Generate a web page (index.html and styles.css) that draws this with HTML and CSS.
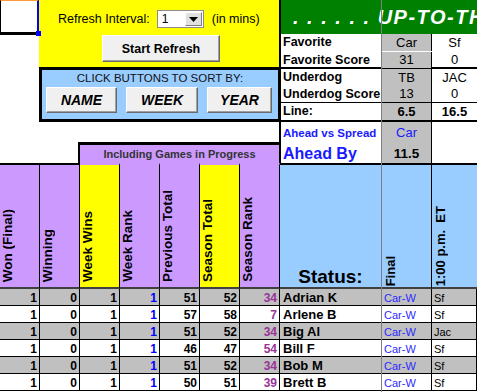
FILE: index.html
```html
<!DOCTYPE html>
<html lang="en">
<head>
    <meta charset="UTF-8">
    <meta name="viewport" content="width=device-width, initial-scale=1.0">
    <title>Weekly Pool</title>
    <link rel="stylesheet" href="styles.css">
</head>
<body>

<div class="sheet">
    <div class="top">
        <div class="left">
            <div class="left-top">
                <div class="corner-col">
                    <div class="corner"><span class="handle"></span></div>
                </div>
                <div class="controls">
                    <div class="refresh">
                        <div class="refresh-row">
                            <span class="label">Refresh Interval:</span>
                            <div class="dropdown">
                                <span class="drop-value">1</span>
                                <span class="drop-btn">
                                    <svg width="9" height="5" viewBox="0 0 9 5"><polygon points="0,0 9,0 4.5,5" fill="#000"/></svg>
                                </span>
                            </div>
                            <span class="label mins">(in mins)</span>
                        </div>
                        <button class="btn start">Start Refresh</button>
                    </div>
                    <div class="sort">
                        <div class="sort-title">CLICK BUTTONS TO SORT BY:</div>
                        <div class="sort-buttons">
                            <button class="btn sort-btn by-name">NAME</button>
                            <button class="btn sort-btn by-week">WEEK</button>
                            <button class="btn sort-btn by-year">YEAR</button>
                        </div>
                    </div>
                </div>
            </div>
            <div class="left-bottom">
                <div class="including">Including Games in Progress</div>
            </div>
        </div>

        <div class="game">
            <div class="banner">. . . . . . UP-TO-THE-MINUTE RESULTS</div>
            <div class="game-row fav">
                <div class="g-label">Favorite</div>
                <div class="g-val shade">Car</div>
                <div class="g-val">Sf</div>
            </div>
            <div class="game-row fav-score">
                <div class="g-label">Favorite Score</div>
                <div class="g-val shade">31</div>
                <div class="g-val">0</div>
            </div>
            <div class="game-row dog">
                <div class="g-label">Underdog</div>
                <div class="g-val shade">TB</div>
                <div class="g-val">JAC</div>
            </div>
            <div class="game-row dog-score">
                <div class="g-label">Underdog Score</div>
                <div class="g-val shade">13</div>
                <div class="g-val">0</div>
            </div>
            <div class="game-row line">
                <div class="g-label">Line:</div>
                <div class="g-val shade bold">6.5</div>
                <div class="g-val bold">16.5</div>
            </div>
            <div class="game-row ahead-vs">
                <div class="g-label">Ahead vs Spread</div>
                <div class="g-val shade">Car</div>
                <div class="g-val"></div>
            </div>
            <div class="game-row ahead-by">
                <div class="g-label">Ahead By</div>
                <div class="g-val shade">11.5</div>
                <div class="g-val"></div>
            </div>
        </div>
    </div>

    <div class="grid head">
        <div class="hc purple boxed"><span class="vt">Won (Final)</span></div>
        <div class="hc purple boxed"><span class="vt">Winning</span></div>
        <div class="hc yellow"><span class="vt">Week Wins</span></div>
        <div class="hc purple"><span class="vt">Week Rank</span></div>
        <div class="hc purple"><span class="vt">Previous Total</span></div>
        <div class="hc yellow"><span class="vt">Season Total</span></div>
        <div class="hc purple"><span class="vt">Season Rank</span></div>
        <div class="hc blue status">Status:</div>
        <div class="hc blue game-col"><span class="vt">Final</span></div>
        <div class="hc blue game-col last"><span class="vt">1:00 p.m.  ET</span></div>
    </div>

    <div id="rows"></div>

    <span class="freeze"></span>
</div>

<script>
    const players = [
        ['Adrian K', 51, 52, 34, 'Sf'],
        ['Arlene B', 57, 58, 7, 'Sf'],
        ['Big Al', 51, 52, 34, 'Jac'],
        ['Bill F', 46, 47, 54, 'Sf'],
        ['Bob M', 51, 52, 34, 'Sf'],
        ['Brett B', 50, 51, 39, 'Sf']
    ];

    const rows = document.getElementById('rows');

    players.forEach((p, i) => {
        const row = document.createElement('div');
        row.className = 'grid row' + (i % 2 === 0 ? ' gray' : '');
        row.innerHTML = `
            <div class="c num">1</div>
            <div class="c num">0</div>
            <div class="c num">1</div>
            <div class="c num rank">1</div>
            <div class="c num">${p[1]}</div>
            <div class="c num">${p[2]}</div>
            <div class="c num season">${p[3]}</div>
            <div class="c name">${p[0]}</div>
            <div class="c pick">Car-W</div>
            <div class="c pick2 last">${p[4]}</div>
        `;
        rows.appendChild(row);
    });
</script>

</body>
</html>
```

FILE: styles.css
```css
* {
    box-sizing: border-box;
}
body {
    margin: 0;
    font-family: "Liberation Sans", Arial, sans-serif;
    background-color: #fff;
    color: #000;
}
.sheet {
    position: relative;
    width: 477px;
    height: 392px;
    overflow: hidden;
}

/* upper area */
.top {
    display: flex;
    height: 163px;
}
.left {
    width: 279px;
    display: flex;
    flex-direction: column;
}
.left-top {
    display: flex;
    height: 122px;
}
.corner-col {
    width: 39px;
}
.corner {
    position: relative;
    height: 35px;
    border-top: 1px solid #ff9933;
    border-left: 1px solid #000;
    border-bottom: 3px solid #000;
    border-right: 2px solid #0000ff;
}
.handle {
    position: absolute;
    right: -4px;
    bottom: -4px;
    width: 5px;
    height: 5px;
    background: #0000ff;
}
.controls {
    width: 240px;
    display: flex;
    flex-direction: column;
}
.refresh {
    height: 67px;
    background: #ffff00;
    padding-top: 10px;
}
.refresh-row {
    display: flex;
    align-items: center;
    height: 18px;
    padding-left: 19px;
}
.label {
    font-size: 12.5px;
}
.dropdown {
    display: flex;
    align-items: center;
    width: 47px;
    height: 18px;
    margin-left: 7px;
    background: #fff;
    border: 1px solid #8c8c8c;
}
.drop-value {
    font-size: 12px;
    padding-left: 4px;
}
.drop-btn {
    display: flex;
    align-items: center;
    justify-content: center;
    width: 17px;
    height: 14px;
    margin-left: auto;
    margin-right: 1px;
    background: #e0e0e0;
    border: 1px solid;
    border-color: #fff #808080 #808080 #fff;
}
.mins {
    margin-left: 8px;
}
.btn {
    padding: 0;
    font-family: "Liberation Sans", Arial, sans-serif;
    color: #000;
    background: #f0f0f0;
    border: 1px solid;
    border-color: #fff #6a6a6a #6a6a6a #fff;
    box-shadow: inset -1px -1px #a0a0a0;
}
.start {
    display: block;
    width: 118px;
    height: 27px;
    margin: 7px 0 0 63px;
    font-size: 12.5px;
    font-weight: bold;
}
.sort {
    height: 55px;
    background: #99ccff;
    border: 3px solid #000;
    border-right-width: 1px;
}
.sort-title {
    font-size: 11.5px;
    line-height: 13px;
    text-align: center;
    color: #111;
    padding-top: 2px;
}
.sort-buttons {
    display: flex;
    gap: 9px;
    padding-left: 4px;
    margin-top: 2px;
}
.sort-btn {
    height: 26px;
    font-size: 14px;
    font-weight: bold;
    font-style: italic;
}
.by-name { width: 71px; }
.by-week { width: 72px; }
.by-year { width: 65px; }

.left-bottom {
    height: 41px;
    padding-top: 20px;
}
.including {
    height: 21px;
    margin-left: 78px;
    background: #cc99ff;
    border-top: 3px solid #000;
    border-left: 2px solid #000;
    font-size: 11px;
    font-weight: bold;
    line-height: 18px;
    text-align: center;
    color: #333;
}

/* game box */
.game {
    width: 198px;
    border-left: 2px solid #000;
}
.banner {
    height: 34px;
    background: #008000;
    color: #fff;
    font-size: 20px;
    font-weight: bold;
    font-style: italic;
    letter-spacing: 1.5px;
    line-height: 34px;
    padding-left: 12px;
    white-space: nowrap;
    overflow: hidden;
}
.game-row {
    display: grid;
    grid-template-columns: 101px 50px 1fr;
    font-size: 13px;
}
.g-label {
    padding-left: 2px;
    font-size: 12.5px;
    font-weight: bold;
    white-space: nowrap;
}
.g-val {
    text-align: center;
}
.shade {
    background: #c0c0c0;
    border-right: 1px solid #000;
}
.bold {
    font-weight: bold;
}
.fav { height: 17px; line-height: 17px; }
.fav-score { height: 18px; line-height: 16px; padding-top: 1px; border-bottom: 2px solid #000; }
.dog { height: 17px; line-height: 17px; }
.dog-score { height: 17px; line-height: 16px; border-bottom: 1px solid #000; }
.line { height: 19px; line-height: 17px; border-bottom: 2px solid #000; }
.ahead-vs {
    height: 22px;
    line-height: 22px;
    color: #1a1aff;
}
.ahead-vs .g-label { font-size: 11.5px; }
.ahead-by { height: 19px; line-height: 19px; }
.ahead-by .g-label { font-size: 16px; color: #1a1aff; }
.ahead-by .g-val { font-size: 13.5px; font-weight: bold; }

/* column headers */
.grid {
    display: grid;
    grid-template-columns: repeat(7, 40px) 102px 50px 1fr;
}
.head {
    height: 126px;
}
.hc {
    display: flex;
    align-items: flex-end;
    padding: 0 0 5px 0;
    border-right: 1px solid #000;
    border-top: 2px solid #cc99ff;
    border-bottom: 2px solid #404040;
    font-size: 13.5px;
    font-weight: bold;
}
.purple { background: #cc99ff; }
.yellow { background: #ffff00; }
.blue {
    background: #99ccff;
    border-top-color: #000;
}
.boxed { border-top-color: #000; }
.vt {
    writing-mode: vertical-rl;
    transform: rotate(180deg);
    line-height: 16px;
    white-space: pre;
}
.status {
    justify-content: center;
    font-size: 19px;
    line-height: 19px;
    padding-bottom: 1px;
}
.game-col {
    padding: 0 0 1px 1px;
    font-size: 13px;
}
.last { border-right: none; }

/* player rows */
.row {
    height: 17px;
}
.row.gray {
    background: #c0c0c0;
}
.c {
    height: 17px;
    border-right: 1px solid #000;
    border-bottom: 1px solid #000;
    padding-top: 2px;
    line-height: 14px;
    white-space: nowrap;
    overflow: hidden;
}
.num {
    text-align: right;
    padding-right: 2px;
    font-size: 12px;
    font-weight: bold;
}
.rank { color: #0000ff; }
.season { color: #993399; }
.name {
    padding-left: 3px;
    font-size: 13px;
    font-weight: bold;
}
.pick {
    padding-left: 2px;
    font-size: 11px;
    color: #2b2bff;
}
.pick2 {
    padding-left: 2px;
    font-size: 11px;
}

.freeze {
    position: absolute;
    left: 381px;
    top: 0;
    bottom: 0;
    width: 1px;
    background: #808080;
}
```
